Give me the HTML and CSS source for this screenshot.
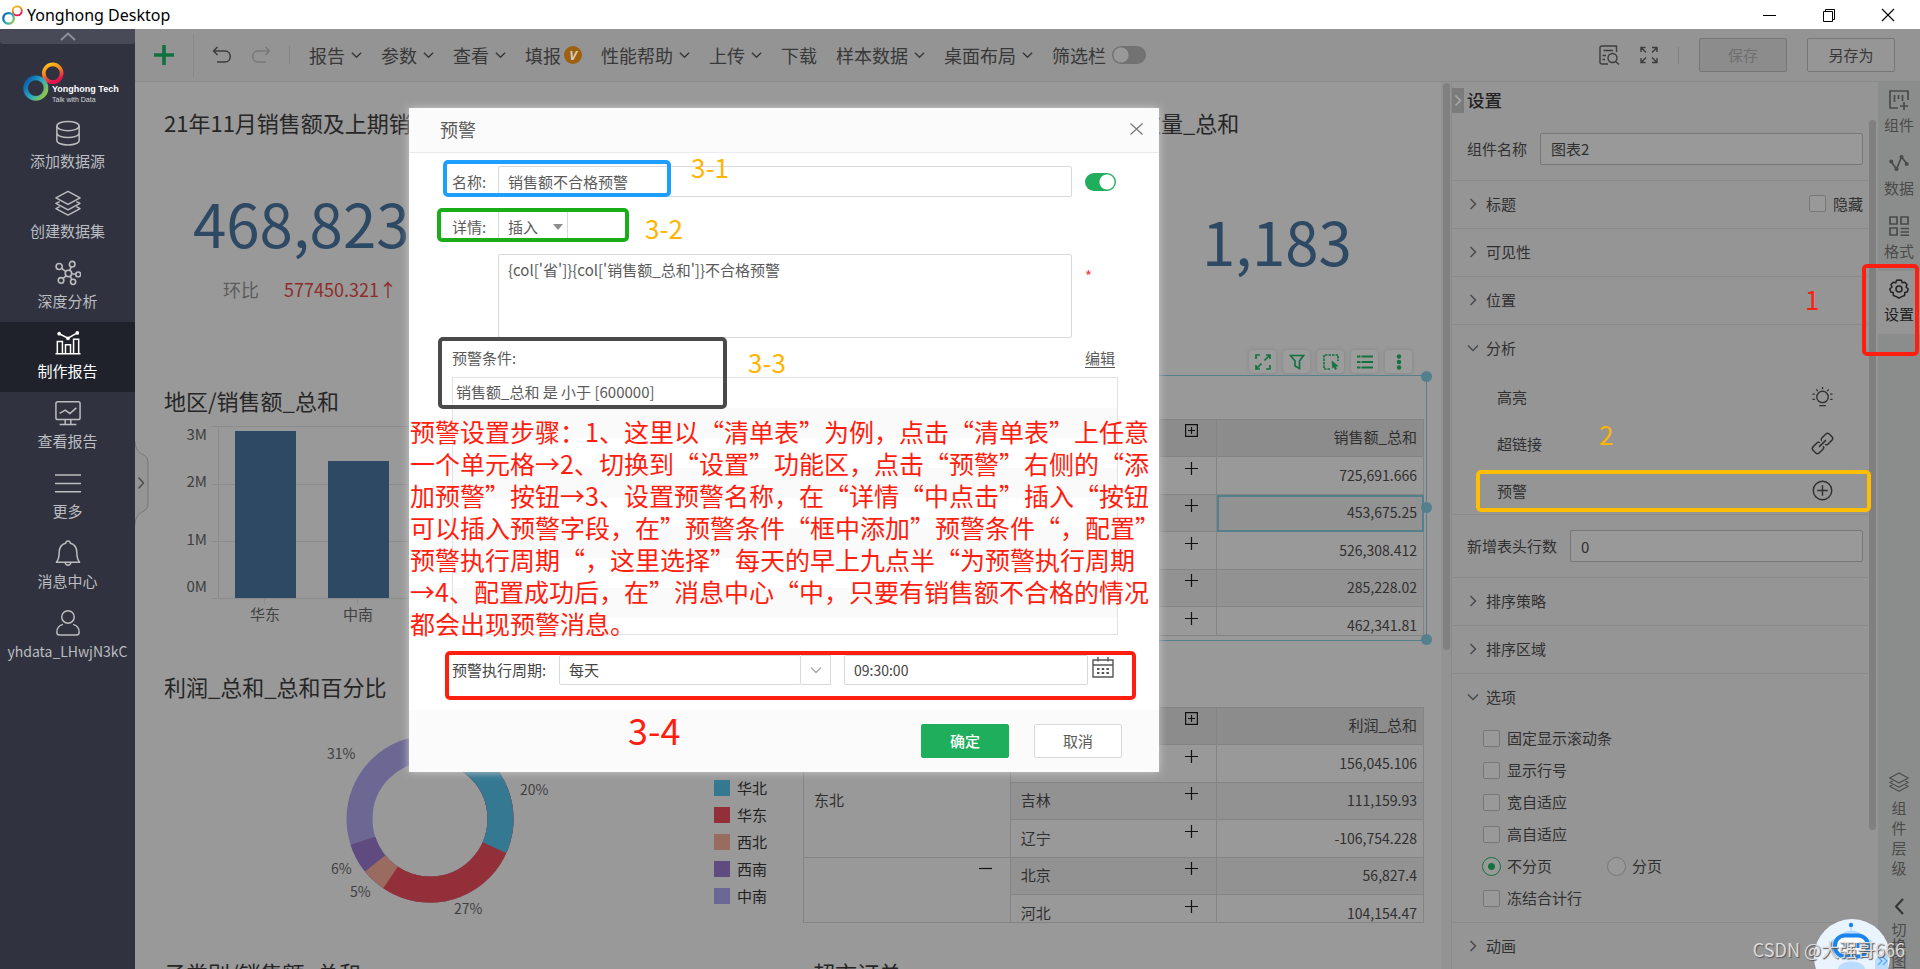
FILE: index.html
```html
<!DOCTYPE html>
<html lang="zh-CN">
<head>
<meta charset="utf-8">
<title>Yonghong Desktop</title>
<link rel="stylesheet" href="styles.css">
</head>
<body>
<svg class="defs" aria-hidden="true">
  <defs>
    <linearGradient id="warm" x1="0" y1="0" x2="0.4" y2="1"><stop offset="0" stop-color="#fbc91b"/><stop offset="0.5" stop-color="#f5861f"/><stop offset="1" stop-color="#e6124e"/></linearGradient>
    <linearGradient id="cool" x1="0" y1="0.2" x2="1" y2="0.9"><stop offset="0" stop-color="#0b62b0"/><stop offset="0.5" stop-color="#2aa9c4"/><stop offset="1" stop-color="#9ccb3b"/></linearGradient>
    <symbol id="down" viewBox="0 0 12 8"><path d="M1 1.5 6 6.5 11 1.5" fill="none" stroke="currentColor" stroke-width="1.5"/></symbol>
    <symbol id="right" viewBox="0 0 8 12"><path d="M1.5 1 6.5 6 1.5 11" fill="none" stroke="currentColor" stroke-width="1.5"/></symbol>
    <symbol id="plus" viewBox="0 0 13 13"><path d="M6.5 0V13M0 6.5H13" fill="none" stroke="currentColor" stroke-width="1.2"/></symbol>
    <symbol id="boxplus" viewBox="0 0 13 13"><path d="M.6.6H12.4V12.4H.6ZM6.5 3V10M3 6.5H10" fill="none" stroke="currentColor" stroke-width="1.2"/></symbol>
    <symbol id="layers" viewBox="0 0 28 28"><path d="M14 1.5 27 8.5 14 15.5 1 8.5ZM5 12.5 1 14.5 14 21.3 27 14.5 23 12.5M5 18 1 20 14 27 27 20 23 18" fill="none" stroke="currentColor" stroke-width="1.5" stroke-linejoin="round"/></symbol>
    <symbol id="rings" viewBox="0 0 40 38"><circle cx="29" cy="11" r="8.7" fill="none" stroke="url(#warm)" stroke-width="3.6"/><circle cx="12.500" cy="25.500" r="10" fill="none" stroke="url(#cool)" stroke-width="4.500"/></symbol>
  </defs>
</svg>

<header class="titlebar">
  <svg class="app-logo" viewBox="0 0 40 38"><use href="#rings"/></svg>
  <span class="app-name">Yonghong Desktop</span>
  <div class="window-buttons">
    <button aria-label="最小化"><svg width="14" height="14"><path d="M0 7.500H13" stroke="#000"/></svg></button>
    <button aria-label="还原"><svg width="14" height="14"><path d="M1.500 3.500H10.500V13.500H1.500ZM3.500 3.500V1.500H12.500V11.500H10.500" fill="none" stroke="#000"/></svg></button>
    <button aria-label="关闭"><svg width="14" height="14"><path d="M1 1 13 13M13 1 1 13" stroke="#000" stroke-width="1.1"/></svg></button>
  </div>
</header>

<div class="app">
  <nav class="sidebar">
    <button class="fold" aria-label="收起"><svg width="16" height="9"><path d="M1 8 8 1.500 15 8" fill="none" stroke="#8f929b" stroke-width="1.800"/></svg></button>
    <div class="brand">
      <svg class="brand-rings" viewBox="0 0 40 38"><use href="#rings"/></svg>
      <div class="brand-text"><b>Yonghong Tech</b><span>Talk with Data</span></div>
    </div>
    <a class="nav-item" href="#"><svg viewBox="0 0 28 28"><g fill="none" stroke="currentColor" stroke-width="1.6"><ellipse cx="14" cy="6.500" rx="12" ry="5"/><path d="M2 6.500V22C2 28.500 26 28.500 26 22V6.500M2 14C2 20.500 26 20.500 26 14"/></g></svg>添加数据源</a>
    <a class="nav-item" href="#"><svg><use href="#layers"/></svg>创建数据集</a>
    <a class="nav-item" href="#"><svg viewBox="0 0 28 28"><g fill="none" stroke="currentColor" stroke-width="1.700"><circle cx="14.500" cy="14.500" r="3.500"/><circle cx="4.500" cy="7" r="3.300"/><circle cx="18.500" cy="4.500" r="3"/><circle cx="25" cy="15.500" r="2.600"/><circle cx="6.500" cy="22" r="3"/><circle cx="19.500" cy="23.500" r="2.800"/><path d="M7.200 9 11.800 12.500M17.500 7.400 15.800 11.200M18 14.900 22.300 15.300M8.700 19.900 12 17M18.200 21 16.300 17.600"/></g></svg>深度分析</a>
    <a class="nav-item active" href="#"><svg viewBox="0 0 28 28"><g fill="none" stroke="currentColor" stroke-width="1.600"><path d="M.5 25.500H27.500M2.500 25V12.500H8V25M11.300 25V16H16.700V25M20 25V10H25.500V25M4.500 4 14 8.800 24 3.200"/></g><g fill="currentColor"><circle cx="4.500" cy="4" r="2"/><circle cx="14" cy="9" r="2"/><circle cx="24" cy="3.200" r="2"/></g></svg>制作报告</a>
    <a class="nav-item" href="#"><svg viewBox="0 0 28 28"><g fill="none" stroke="currentColor" stroke-width="1.600"><rect x="1" y="2" width="26" height="19" rx="2"/><path d="M5 14.500 11 11 16 14.500 23 8.500M11 21V26M17 21V26M5 26.500H23"/></g></svg>查看报告</a>
    <a class="nav-item" href="#"><svg viewBox="0 0 28 28"><path d="M0 5.500H28M0 14.500H28M0 23.500H28" stroke="currentColor" stroke-width="1.600"/></svg>更多</a>
    <a class="nav-item" href="#"><svg viewBox="0 0 28 28"><path d="M1.500 24C4 21 4.500 19 4.500 13.500 4.500 8 7.500 4.500 11.500 3.500 12 .3 16 .3 16.500 3.500 20.500 4.500 23.500 8 23.500 13.500 23.500 19 24 21 26.500 24ZM11 24.500C11.500 28 16.500 28 17 24.500" fill="none" stroke="currentColor" stroke-width="1.600" stroke-linejoin="round"/></svg>消息中心</a>
    <a class="nav-item user" href="#"><svg viewBox="0 0 28 28"><g fill="none" stroke="currentColor" stroke-width="1.600"><circle cx="14" cy="7.500" r="6.700"/><path d="M8.500 15.500C4.500 16.500 2 19.500 2 24 2 26 3 27 5 27H23C25 27 26 26 26 24 26 19.500 23.500 16.500 19.500 15.500"/></g></svg>yhdata_LHwjN3kC</a>
  </nav>

  <main class="main">
    <div class="toolbar">
      <button class="add" aria-label="新建"><svg width="20" height="20"><path d="M10 0V20M0 10H20" stroke="#10713f" stroke-width="3.600"/></svg></button>
      <div class="history">
        <button aria-label="撤销"><svg width="20" height="18"><path d="M5.500 1 1.500 5 5.500 9M1.500 5H13C20 5 20 16 13 16H5" fill="none" stroke="#3c3c3c" stroke-width="1.500"/></svg></button>
        <button aria-label="重做"><svg width="20" height="18"><path d="M14.500 1 18.500 5 14.500 9M18.500 5H7C0 5 0 16 7 16H15" fill="none" stroke="#787878" stroke-width="1.500"/></svg></button>
      </div>
      <div class="menus">
        <button>报告<svg><use href="#down"/></svg></button>
        <button>参数<svg><use href="#down"/></svg></button>
        <button>查看<svg><use href="#down"/></svg></button>
        <button class="tight">填报<span class="vip">V</span></button>
        <button>性能帮助<svg><use href="#down"/></svg></button>
        <button>上传<svg><use href="#down"/></svg></button>
        <button>下载</button>
        <button>样本数据<svg><use href="#down"/></svg></button>
        <button>桌面布局<svg><use href="#down"/></svg></button>
        <label class="filter">筛选栏<input type="checkbox" class="switch"></label>
      </div>
      <div class="actions">
        <button aria-label="预览"><svg width="21" height="20"><g fill="none" stroke="#3c3c3c" stroke-width="1.400"><path d="M9 19H3C2 19 1 18.500 1 17.500V2.500C1 1.500 2 1 3 1H17.500V7M4.500 5.500H14M3.500 10.500H7M3.500 14.500H6"/><circle cx="13.500" cy="13" r="4.500"/><path d="M16.500 16.500 20 19.500"/></g></svg></button>
        <button aria-label="全屏"><svg width="18" height="18"><path d="M1 6V1.500H5.500M1 1.500 6 6.500M12 1.500H17V6M17 1.500 12 6.500M1 12V16.500H5.500M1 16.500 6 11.500M12 16.500H17V12M17 16.500 12 11.500" fill="none" stroke="#3c3c3c" stroke-width="1.400"/></svg></button>
        <span class="sep"></span>
        <button class="btn disabled">保存</button>
        <button class="btn">另存为</button>
      </div>
    </div>

    <div class="workspace">
      <section class="canvas">
        <div class="board">
          <div class="kpis">
            <article class="kpi">
              <h2>21年11月销售额及上期销售额</h2>
              <p class="figure">468,823</p>
              <p class="compare">环比<span>577450.321↑</span></p>
            </article>
            <article class="kpi quantity">
              <h2>数量_总和</h2>
              <p class="figure">1,183</p>
            </article>
          </div>

          <article class="widget">
            <h2>地区/销售额_总和</h2>
            <svg class="bars" viewBox="0 0 600 206">
              <path d="M48 6.500H600M48 64.500H600M48 121.500H600M48 178.500H600M54.500 6V179M100.500 179V184M193.500 179V184" stroke="#8b8b8b" fill="none"/>
              <rect x="71" y="11" width="61" height="167" fill="#2e4963"/>
              <rect x="164" y="41" width="61" height="137" fill="#2e4963"/>
              <g text-anchor="end"><text x="43" y="20">3M</text><text x="43" y="67">2M</text><text x="43" y="125">1M</text><text x="43" y="172">0M</text></g>
              <g text-anchor="middle" class="cat"><text x="101" y="200">华东</text><text x="194" y="200">中南</text></g>
            </svg>
          </article>

          <article class="widget">
            <div class="pivot sales">
              <table>
                <tr><th></th><th><div><span></span><button aria-label="展开全部"><svg><use href="#boxplus"/></svg></button></div></th><th class="num">销售额_总和</th></tr>
                <tr><td></td><td><div><span></span><button aria-label="展开"><svg><use href="#plus"/></svg></button></div></td><td class="num">725,691.666</td></tr>
                <tr><td></td><td><div><span></span><button aria-label="展开"><svg><use href="#plus"/></svg></button></div></td><td class="num picked">453,675.25</td></tr>
                <tr><td></td><td><div><span></span><button aria-label="展开"><svg><use href="#plus"/></svg></button></div></td><td class="num">526,308.412</td></tr>
                <tr><td></td><td><div><span></span><button aria-label="展开"><svg><use href="#plus"/></svg></button></div></td><td class="num">285,228.02</td></tr>
                <tr><td></td><td><div><span></span><button aria-label="展开"><svg><use href="#plus"/></svg></button></div></td><td class="num">462,341.81</td></tr>
              </table>
            </div>
            <div class="selection"><i></i><i></i><i></i></div>
            <div class="widget-tools">
              <button aria-label="放大"><svg viewBox="0 0 16 16"><path d="M1 5V1H5M11 1H15V5M15 11V15H11M5 15H1V11M9.500 6.500 15 1M6.500 9.500 1 15"/></svg></button>
              <button aria-label="筛选"><svg viewBox="0 0 16 16"><path d="M1.500 1.500H14.500L10.500 7V14.500L6 12V7Z"/></svg></button>
              <button aria-label="框选"><svg viewBox="0 0 16 16"><path d="M7 15H1V1H15V7" stroke-dasharray="2.500 1"/><path d="M9 7 15 12 12.500 12.500 13.500 15 12 15.500 11 13 9.500 14Z" fill="currentColor" stroke-width=".6"/></svg></button>
              <button aria-label="明细"><svg viewBox="0 0 16 16"><path d="M0 2.500H3.500M4.500 2.500H16M0 8H3.500M4.500 8H16M0 13.500H3.500M4.500 13.500H16" stroke-width="2.200"/></svg></button>
              <button aria-label="更多"><svg viewBox="0 0 16 16"><g fill="currentColor" stroke="none"><circle cx="8" cy="2.500" r="2.200"/><circle cx="8" cy="8" r="2.200"/><circle cx="8" cy="13.500" r="2.200"/></g></svg></button>
            </div>
          </article>

          <article class="widget">
            <h2>利润_总和_总和百分比</h2>
            <div class="donut-row">
              <svg class="donut" viewBox="0 0 400 220">
                <g fill="none" stroke-width="26" transform="rotate(-90 266 121)">
                  <circle cx="266" cy="121" r="70.500" pathLength="360" stroke="#6c6893"/>
                  <circle cx="266" cy="121" r="70.500" pathLength="360" stroke="#5f4b80" stroke-dasharray="252 360"/>
                  <circle cx="266" cy="121" r="70.500" pathLength="360" stroke="#9a6b5f" stroke-dasharray="231 360"/>
                  <circle cx="266" cy="121" r="70.500" pathLength="360" stroke="#932f39" stroke-dasharray="214 360"/>
                  <circle cx="266" cy="121" r="70.500" pathLength="360" stroke="#357892" stroke-dasharray="114 360"/>
                </g>
                <text x="163" y="61">31%</text><text x="356" y="97">20%</text><text x="167" y="176">6%</text><text x="186" y="199">5%</text><text x="290" y="216">27%</text>
              </svg>
              <ul class="legend">
                <li class="nb">华北</li><li class="hd">华东</li><li class="xb">西北</li><li class="xn">西南</li><li class="zn">中南</li>
              </ul>
            </div>
          </article>

          <article class="widget">
            <div class="pivot profit">
              <table>
                <tr><th></th><th><div><span></span><button aria-label="展开全部"><svg><use href="#boxplus"/></svg></button></div></th><th class="num">利润_总和</th></tr>
                <tr><td rowspan="3">东北</td><td><div><span></span><button aria-label="展开"><svg><use href="#plus"/></svg></button></div></td><td class="num">156,045.106</td></tr>
                <tr><td><div><span>吉林</span><button aria-label="展开"><svg><use href="#plus"/></svg></button></div></td><td class="num">111,159.93</td></tr>
                <tr><td><div><span>辽宁</span><button aria-label="展开"><svg><use href="#plus"/></svg></button></div></td><td class="num">-106,754.228</td></tr>
                <tr><td rowspan="2" class="top"><div><span></span><button aria-label="收起"><svg viewBox="0 0 13 13"><path d="M0 6.500H13" stroke="currentColor" stroke-width="1.200"/></svg></button></div></td><td><div><span>北京</span><button aria-label="展开"><svg><use href="#plus"/></svg></button></div></td><td class="num">56,827.4</td></tr>
                <tr><td><div><span>河北</span><button aria-label="展开"><svg><use href="#plus"/></svg></button></div></td><td class="num">104,154.47</td></tr>
              </table>
            </div>
          </article>

          <article class="widget"><h2>子类别/销售额_总和</h2></article>
          <article class="widget"><h2 class="inset">超市订单</h2></article>
        </div>
        <div class="scroll"><span></span></div>
        <button class="flap" aria-label="展开左侧栏"><svg width="14" height="84"><path d="M0 .500C1 17 13 10 13 22V62C13 74 1 67 0 83.500" fill="#959595" stroke="#74767c"/><path d="M3.500 36.500 8.500 42 3.500 47.500" fill="none" stroke="#4c4c4c" stroke-width="1.400"/></svg></button>
      </section>

      <aside class="settings">
        <button class="tab-fold" aria-label="收起设置"><svg><use href="#right"/></svg></button>
        <h3>设置</h3>
        <div class="panel-row name-row"><label for="cname">组件名称</label><input id="cname" type="text" value="图表2"></div>
        <div class="section"><button class="head"><svg class="r"><use href="#right"/></svg>标题</button><label class="check"><input type="checkbox">隐藏</label></div>
        <div class="section"><button class="head"><svg class="r"><use href="#right"/></svg>可见性</button></div>
        <div class="section"><button class="head"><svg class="r"><use href="#right"/></svg>位置</button></div>
        <div class="group">
          <button class="head"><svg class="d"><use href="#down"/></svg>分析</button>
          <div class="feature">高亮<button aria-label="高亮"><svg viewBox="0 0 22 22"><g fill="none" stroke="currentColor" stroke-width="1.400"><circle cx="11" cy="11.500" r="6"/><path d="M7.500 20.500H14.500M11 1V3.500M4.500 3.500 6 5.300M17.500 3.500 16 5.300M.5 8.500H3M.5 14H3M21.500 8.500H19M21.500 14H19"/></g></svg></button></div>
          <div class="feature">超链接<button aria-label="超链接"><svg viewBox="0 0 22 22"><g fill="none" stroke="currentColor" stroke-width="1.500" transform="rotate(-45 11 11)"><path d="M9.500 8.500V8A2 2 0 0 0 7.500 6.500H1.500A2.500 2.500 0 0 0-1 9V13A2.500 2.500 0 0 0 1.500 15.500H7.500A2 2 0 0 0 9.500 13.500M12.500 8.500V8A2 2 0 0 1 14.500 6.500H20.500A2.500 2.500 0 0 1 23 9V13A2.500 2.500 0 0 1 20.500 15.500H14.500A2 2 0 0 1 12.500 13.500M6 11H16"/></g></svg></button></div>
          <div class="feature">预警<button aria-label="添加预警"><svg viewBox="0 0 22 22"><g fill="none" stroke="currentColor" stroke-width="1.500"><circle cx="11" cy="11" r="9.700"/><path d="M11 5.500V16.500M5.500 11H16.500"/></g></svg></button></div>
        </div>
        <div class="panel-row"><label for="hrows">新增表头行数</label><input id="hrows" type="text" value="0"></div>
        <div class="section"><button class="head"><svg class="r"><use href="#right"/></svg>排序策略</button></div>
        <div class="section"><button class="head"><svg class="r"><use href="#right"/></svg>排序区域</button></div>
        <div class="group options">
          <button class="head"><svg class="d"><use href="#down"/></svg>选项</button>
          <label class="check"><input type="checkbox">固定显示滚动条</label>
          <label class="check"><input type="checkbox">显示行号</label>
          <label class="check"><input type="checkbox">宽自适应</label>
          <label class="check"><input type="checkbox">高自适应</label>
          <div class="radios"><label class="check"><input type="radio" name="page" checked>不分页</label><label class="check"><input type="radio" name="page">分页</label></div>
          <label class="check"><input type="checkbox">冻结合计行</label>
        </div>
        <div class="section last"><button class="head"><svg class="r"><use href="#right"/></svg>动画</button></div>
        <div class="panel-scroll"></div>
      </aside>

      <div class="rail">
        <button><svg viewBox="0 0 20 20"><path d="M19 10V1H1V18H9M5.500 5V12M9.500 5V9M13.500 5V11M15 12V20M11 16H19" fill="none" stroke="currentColor" stroke-width="1.700"/></svg>组件</button>
        <button><svg viewBox="0 0 20 20"><path d="M2 8.500 7.500 16 12.500 4 18 11" fill="none" stroke="currentColor" stroke-width="1.700"/><g fill="currentColor"><circle cx="2.300" cy="8.500" r="2"/><circle cx="7.500" cy="16" r="2"/><circle cx="12.500" cy="4" r="2"/><circle cx="17.700" cy="11" r="2"/></g></svg>数据</button>
        <button><svg viewBox="0 0 20 20"><path d="M1 1H8V8H1ZM12 1H19V8H12ZM1 12H8V19H1ZM11.500 12.500H20M11.500 16H20M11.500 19.300H20" fill="none" stroke="currentColor" stroke-width="1.700"/></svg>格式</button>
        <button class="on"><svg viewBox="0 0 20 20"><path d="M10 .900 12.400 1.300 13.200 3.700 15.800 3.200 18 5.600 17 8 19.200 10 18.200 13 15.800 13.600 15.600 16.500 12.700 17.600 10 19.200 7.300 17.600 4.400 16.500 4.200 13.600 1.800 13 .8 10 3 8 2 5.600 4.200 3.200 6.800 3.700 7.600 1.300Z" fill="none" stroke="currentColor" stroke-width="1.500" stroke-linejoin="round"/><circle cx="10" cy="10" r="3" fill="none" stroke="currentColor" stroke-width="1.500"/></svg>设置</button>
        <div class="rail-bottom">
          <button class="stack"><svg><use href="#layers"/></svg><span>组件层级</span></button>
          <button class="flip"><svg width="10" height="17"><path d="M9 1 2 8.500 9 16" fill="none" stroke="#333" stroke-width="2"/></svg><span>切换图</span></button>
        </div>
      </div>
    </div>
  </main>
</div>

<form class="dialog" role="dialog" aria-label="预警">
  <header><h1>预警</h1><button type="button" aria-label="关闭"><svg width="13" height="12"><path d="M.5.5 12.500 11.500M12.500.5.5 11.500" stroke="#777" stroke-width="1.200"/></svg></button></header>
  <div class="dialog-body">
    <div class="field"><label for="wname">名称:</label><input id="wname" type="text" value="销售额不合格预警"><input type="checkbox" class="switch green" aria-label="启用" checked></div>
    <div class="field"><label for="insert">详情:</label><div class="insert"><select id="insert"><option>插入</option></select><svg width="10" height="6"><path d="M0 0H10L5 6Z" fill="#8d8d8d"/></svg></div></div>
    <div class="field detail"><span></span><textarea aria-label="详情">{col['省']}{col['销售额_总和']}不合格预警</textarea><span class="must">*</span></div>
    <div class="cond-head"><span>预警条件:</span><a href="#">编辑</a></div>
    <ul class="conds"><li>销售额_总和 是 小于 [600000]</li></ul>
    <div class="period">
      <label for="cycle">预警执行周期:</label>
      <div class="cycle"><select id="cycle"><option>每天</option></select><span><svg><use href="#down"/></svg></span></div>
      <input type="text" aria-label="时间" value="09:30:00">
      <button type="button" aria-label="选择时间"><svg width="22" height="21"><path d="M1 3H21V20H1ZM1 8H21M6 0V4.500M16 0V4.500" fill="none" stroke="#555" stroke-width="1.400"/><path d="M5 12H17M5 16H17" stroke="#555" stroke-width="2.200" stroke-dasharray="2.500 2.200"/></svg></button>
    </div>
  </div>
  <footer><button type="button" class="ok">确定</button><button type="button" class="cancel">取消</button></footer>
</form>

<div class="mark box blue"></div>
<div class="mark box leaf"></div>
<div class="mark box slate"></div>
<div class="mark box cycle-box"></div>
<div class="mark box amber"></div>
<div class="mark box rail-box"></div>
<span class="mark tag t31">3-1</span>
<span class="mark tag t32">3-2</span>
<span class="mark tag t33">3-3</span>
<span class="mark tag t34">3-4</span>
<span class="mark tag t1">1</span>
<span class="mark tag t2">2</span>
<p class="mark steps">预警设置步骤：1、这里以“清单表”为例，点击“清单表”上任意<br>一个单元格→2、切换到“设置”功能区，点击“预警”右侧的“添<br>加预警”按钮→3、设置预警名称，在“详情“中点击”插入“按钮<br>可以插入预警字段，在”预警条件“框中添加”预警条件“，配置”<br>预警执行周期“，这里选择”每天的早上九点半“为预警执行周期<br>→4、配置成功后，在”消息中心“中，只要有销售额不合格的情况<br>都会出现预警消息。</p>

<svg class="robot" viewBox="0 0 76 50" aria-hidden="true">
  <circle cx="38" cy="38" r="38" fill="#eaf4ff"/>
  <circle cx="37" cy="6" r="2.200" fill="#1c84f0"/><path d="M37 8V12" stroke="#b9dcff" stroke-width="1.500"/>
  <path d="M27 17C29 10 46 10 48 17Z" fill="#b9dcff"/>
  <rect x="16" y="20" width="43" height="14" rx="5" fill="#b9dcff"/>
  <rect x="21" y="16.500" width="33" height="21" rx="10" fill="#fff" stroke="#1c84f0" stroke-width="4"/>
  <path d="M31 24V29M44 24V29" stroke="#1c84f0" stroke-width="3"/>
  <path d="M24 50C25 40 50 40 51 50Z" fill="#b9dcff"/>
  <path d="M61 50V42C62 37 68 34 74 34V50Z" fill="#b9dcff"/><path d="M64 38 68 42 64 46M69 38 73 42 69 46" fill="none" stroke="#5aa8f8" stroke-width="1.200"/>
</svg>
<span class="watermark">CSDN @大强哥666</span>
</body>
</html>
```

FILE: styles.css
```css
* { box-sizing: border-box; }

body {
  margin: 0;
  height: 100vh;
  overflow: hidden;
  display: flex;
  flex-direction: column;
  position: relative;
  background: #fff;
  color: #303030;
  font: 15px/20px "Noto Sans CJK SC", "Noto Sans", sans-serif;
}

h1, h2, h3, p, ul { margin: 0; padding: 0; font-weight: 400; list-style: none; }
button, input, select, textarea { font: inherit; color: inherit; margin: 0; }
button { padding: 0; border: 0; background: none; }
a { color: inherit; text-decoration: none; }
.defs { position: absolute; width: 0; height: 0; }

/* Title bar */
.titlebar { flex: none; height: 29px; display: flex; align-items: center; background: #fff; color: #000; }
.app-logo { width: 21px; height: 20px; margin: 0 4px 0 2px; }
.app-name { font-family: "Noto Sans", sans-serif; font-size: 16px; }
.window-buttons { margin-left: auto; display: flex; padding-right: 3px; }
.window-buttons button { width: 59px; height: 28px; display: grid; place-items: center; }

.app { flex: 1; min-height: 0; display: flex; }

/* Sidebar */
.sidebar { flex: none; width: 135px; background: #30333f; color: #bcbdc1; overflow: hidden; }
.fold { display: grid; place-items: center; width: 100%; height: 15px; background: #484b57; border-radius: 0 0 3px 3px; }
.brand { height: 68px; padding: 18px 0 0 23px; display: flex; }
.brand-rings { flex: none; width: 41px; height: 39px; }
.brand-text { margin: 22px 0 0 -12px; color: #fff; display: flex; flex-direction: column; white-space: nowrap; }
.brand-text b { font: 700 9px/11px "Liberation Sans", sans-serif; }
.brand-text span { color: #d4d5d8; font: 7px/9px "Liberation Sans", sans-serif; }
.nav-item { height: 70px; padding-top: 8px; display: flex; flex-direction: column; align-items: center; gap: 5px; }
.nav-item svg { width: 26px; height: 26px; }
.nav-item.active { background: #20222b; color: #fff; }
.nav-item.user { font-size: 14px; }

.main { flex: 1; min-width: 0; display: flex; flex-direction: column; background: #999; }

/* Toolbar */
.toolbar { flex: none; height: 53px; display: flex; align-items: center; background: #949494; border-bottom: 1px solid #898989; color: #383838; font-size: 18px; }
.toolbar button { display: flex; align-items: center; }
.toolbar .add { width: 59px; height: 43px; justify-content: center; border-right: 1px solid #898989; }
.history { display: flex; gap: 19px; padding: 0 18px; height: 18px; border-right: 1px solid #828282; }
.menus { display: flex; gap: 19px; padding: 0 0 1px 19px; white-space: nowrap; }
.menus button, .filter { display: flex; align-items: center; gap: 6px; }
.menus .tight { gap: 3px; }
.menus svg { width: 11px; height: 8px; }
.vip { width: 18px; height: 18px; border-radius: 50%; background: #9c6010; color: #d8cdbb; font: italic 700 13px/18px "Noto Sans", sans-serif; text-align: center; }
.switch { appearance: none; width: 34px; height: 18px; border-radius: 9px; background: radial-gradient(circle at 9px 9px, #999 7px, transparent 8px) #727272; }
.actions { margin-left: auto; padding-right: 25px; display: flex; align-items: center; gap: 20px; }
.actions .sep { width: 1px; height: 17px; background: #808080; }
.actions .btn { width: 88px; height: 34px; justify-content: center; border: 1px solid #777; border-radius: 2px; font-size: 15px; background: #969696; }
.actions .disabled { background: #8c8c8c; color: #6f6f6f; }

.workspace { flex: 1; min-height: 0; display: flex; }

/* Dashboard canvas */
.canvas { flex: 1; min-width: 0; display: flex; position: relative; overflow: hidden; }
.board {
  flex: 1; min-width: 0; padding: 20px 17px 0 29px;
  display: grid; grid-template: 278px 286px 286px 60px / minmax(0, 639fr) minmax(0, 621fr);
}
.board h2 { font-size: 22px; line-height: 40px; color: #262626; white-space: nowrap; }
.board h2.inset { padding-left: 10px; }
.kpis { grid-column: 1 / 3; display: grid; grid-template-columns: minmax(0, 975fr) minmax(0, 285fr); }
.figure { font-size: 60px; line-height: 80px; color: #2e4963; padding: 40px 0 0 29px; }
.compare { padding: 12px 0 0 59px; font-size: 18px; line-height: 30px; color: #5c5c5c; }
.compare span { color: #8f2c2a; padding-left: 25px; }
.quantity .figure { padding: 58px 0 0 63px; }
.widget { position: relative; min-width: 0; }
.bars { display: block; width: 600px; height: 206px; }
.bars text, .donut text { font-size: 15px; fill: #404040; }
.donut-row { display: flex; justify-content: space-between; padding-right: 36px; }
.donut { width: 400px; height: 220px; margin-top: -8px; }
.donut text { font-size: 14px; }
.legend { padding-top: 68px; display: grid; grid-auto-rows: 27px; color: #222; }
.legend li { display: flex; align-items: center; gap: 7px; }
.legend li::before { content: ""; width: 16px; height: 16px; background: #6c6893; }
.legend .nb::before { background: #357892; }
.legend .hd::before { background: #932f39; }
.legend .xb::before { background: #9a6b5f; }
.legend .xn::before { background: #5f4b80; }

.pivot { overflow: hidden; border: solid #848484; border-width: 0 0 1px; }
.sales { margin-top: 39px; height: 217px; }
.profit { margin-top: 41px; height: 216px; }
.pivot table { width: 100%; table-layout: fixed; border-collapse: collapse; }
.pivot tr { height: 38px; }
.pivot tr:nth-child(odd) { height: 37px; }
.pivot th, .pivot td { padding: 0 6px 2px 10px; border: 1px solid #848484; font-weight: 400; text-align: left; }
.pivot th { background: #8c8c8c; }
.pivot tr:nth-child(odd) td:not([rowspan]) { background: #929292; }
.pivot .num { text-align: right; font-size: 14px; }
.pivot th.num { font-size: 15px; }
.pivot div { display: flex; justify-content: space-between; align-items: center; height: 34px; padding-right: 12px; }
.pivot div button { align-self: flex-start; padding-top: 4px; color: #111; }
.pivot svg { display: block; width: 13px; height: 13px; }
.pivot .top { vertical-align: top; }
.pivot .picked { outline: 2px solid #54808e; outline-offset: -2px; }

.selection { position: absolute; inset: -5px -3px 25px 0; border: 1px solid #54808e; }
.selection i { position: absolute; right: -6px; top: -5px; width: 11px; height: 11px; border-radius: 50%; background: #54808e; }
.selection i:nth-child(2) { top: 126px; }
.selection i:nth-child(3) { top: auto; bottom: -5px; }
.widget-tools { position: absolute; right: 12px; top: -30px; display: flex; gap: 7px; color: #13733f; }
.widget-tools button { width: 27px; height: 23px; display: grid; place-items: center; background: #9c9c9c; border-radius: 4px; box-shadow: 0 0 4px #858585; }
.widget-tools svg { width: 16px; height: 16px; fill: none; stroke: currentColor; stroke-width: 1.7; }

.scroll { flex: none; width: 10px; background: #939393; padding: 1px 1px 0 2px; }
.scroll span { display: block; height: 64%; background: #808080; border-radius: 4px; }
.flap { position: absolute; left: 0; top: 359px; }

/* Settings panel */
.settings { flex: none; width: 427px; position: relative; background: #959595; border-left: 1px solid #8a8a8a; overflow: hidden; padding-left: 1px; }
.settings h3 { padding-left: 14px; line-height: 36px; height: 39px; color: #222; font-weight: 500; }
.tab-fold { position: absolute; left: 0; top: 6px; width: 12px; height: 25px; background: #7c7c7c; color: #aaa; display: grid; place-items: center; }
.tab-fold svg { width: 8px; height: 13px; }
.panel-row { height: 63px; display: flex; align-items: center; gap: 13px; padding: 0 5px 0 14px; border-bottom: 1px solid #8a8a8a; margin-right: 10px; }
.name-row { height: 60px; padding-bottom: 4px; }
.panel-row input { flex: 1; min-width: 0; height: 32px; padding: 0 10px; border: 1px solid #777; border-radius: 2px; background: #999; }
.section { height: 48px; display: flex; align-items: center; justify-content: space-between; padding-right: 5px; margin-right: 10px; border-bottom: 1px solid #8a8a8a; }
.section.last { border: 0; }
.group { border-bottom: 1px solid #8a8a8a; margin-right: 10px; }
.head { height: 48px; padding: 0 0 2px 14px; display: flex; align-items: center; gap: 7px; }
.head svg { width: 12px; height: 12px; color: #4a4a4a; }
.head .d { height: 8px; }
.feature { height: 47px; padding: 0 35px 0 44px; display: flex; align-items: center; justify-content: space-between; }
.feature svg { display: block; width: 21px; height: 21px; overflow: visible; }
.check { height: 32px; display: flex; align-items: center; gap: 7px; }
.section .check { padding-bottom: 2px; }
.check input { appearance: none; width: 17px; height: 17px; border: 1px solid #777; border-radius: 2px; background: #999; }
.check input[type="radio"] { width: 19px; height: 19px; border-radius: 50%; margin-left: -1px; margin-right: -1px; }
.check input[type="radio"]:checked { border: 1px solid #13733f; background: radial-gradient(circle, #13733f 3px, #999 4px); }
.options { padding-bottom: 8px; }
.options .check { padding-left: 30px; }
.radios { display: flex; gap: 26px; }
.panel-scroll { position: absolute; right: 2px; top: 38px; width: 7px; height: 80%; border-radius: 4px; background: #808080; }

/* Right rail */
.rail { flex: none; width: 42px; background: #8a8d8b; color: #4a4a4a; display: flex; flex-direction: column; overflow: hidden; }
.rail > button { flex: none; height: 63px; padding-bottom: 2px; display: flex; flex-direction: column; align-items: center; justify-content: center; gap: 5px; }
.rail svg { width: 20px; height: 20px; }
.rail .on { background: #959595; color: #222; }
.rail-bottom { margin-top: auto; display: flex; flex-direction: column; align-items: center; }
.rail-bottom button { display: flex; flex-direction: column; align-items: center; gap: 6px; }
.rail-bottom span { width: 15px; line-height: 20px; }
.rail-bottom .flip { padding-top: 20px; }
.rail-bottom .flip svg { width: 10px; height: 17px; }
.rail-bottom .flip span { line-height: 16px; }

/* Alert dialog */
.dialog { position: absolute; left: 409px; top: 108px; width: 750px; background: #fff; color: #5a5a5a; border-radius: 2px; box-shadow: 0 0 8px #ccc; }
.dialog header { height: 45px; padding: 0 16px 2px 31px; display: flex; align-items: center; justify-content: space-between; background: #fbfbfb; border-bottom: 1px solid #eaeaf0; }
.dialog h1 { font-size: 18px; }
.dialog-body { padding: 13px 41px 26px 43px; }
.dialog input[type="text"], .dialog textarea, .dialog select { border: 1px solid #d9d9d9; border-radius: 2px; background: #fff; padding: 0 9px; }
.dialog select { appearance: none; width: 100%; height: 100%; }
.field { display: grid; grid-template-columns: 46px minmax(0, 1fr) 33px; align-items: center; height: 31px; margin-bottom: 14px; }
.field input[type="text"] { height: 31px; margin-right: 13px; }
.dialog .switch { justify-self: start; width: 31px; background: radial-gradient(circle at 22px 9px, #fff 7px, transparent 8px) #1fae5c; }
.insert { position: relative; width: 70px; height: 31px; }
.insert svg { position: absolute; right: 5px; top: 13px; }
.detail { height: 84px; margin: -2px 0 6px; }
.detail textarea { height: 84px; margin-right: 13px; padding-top: 5px; resize: none; }
.must { color: #f33; align-self: start; padding-top: 12px; }
.cond-head { display: flex; justify-content: space-between; align-items: center; height: 28px; padding-right: 3px; }
.cond-head a { border-bottom: 1px solid #555; line-height: 18px; }
.conds { height: 258px; margin-top: 5px; border: 1px solid #e2e2e2; padding-left: 3px; line-height: 27px; background: repeating-linear-gradient(#fff 0 30px, #fafafa 30px 60px); }
.period { margin-top: 20px; height: 29px; display: flex; align-items: center; color: #444; }
.cycle { display: flex; width: 272px; height: 30px; margin-left: auto; }
.cycle span { flex: none; width: 30px; display: grid; place-items: center; border: 1px solid #d9d9d9; border-left: 0; color: #aaa; }
.cycle svg { width: 12px; height: 8px; }
.period input[type="text"] { width: 244px; height: 30px; margin: 0 2px 0 13px; font-size: 14px; }
.period button { width: 28px; text-align: left; padding-left: 2px; }
.dialog footer { height: 62px; padding: 0 37px 1px 0; display: flex; align-items: center; justify-content: flex-end; gap: 25px; background: #fbfbfb; }
.dialog footer button { width: 88px; height: 34px; border: 1px solid #d9d9d9; border-radius: 2px; background: #fff; }
.dialog footer .ok { background: #1fae5c; border-color: #1fae5c; color: #fff; font-weight: 500; }

/* Annotation marks laid over the window */
.mark { position: absolute; }
.box { border: 4px solid #ff1e10; border-radius: 5px; pointer-events: none; }
.blue { left: 443px; top: 160px; width: 228px; height: 37px; border-color: #1e9fff; }
.leaf { left: 437px; top: 208px; width: 192px; height: 34px; border-color: #1aad19; }
.slate { left: 438px; top: 337px; width: 289px; height: 72px; border-color: #4a4a4a; }
.cycle-box { left: 445px; top: 651px; width: 691px; height: 49px; }
.amber { left: 1476px; top: 470px; width: 395px; height: 42px; border-color: #ffbf00; }
.rail-box { left: 1862px; top: 264px; width: 57px; height: 92px; }
.tag { font-size: 26px; line-height: 30px; color: #ffb400; }
.t31 { left: 691px; top: 152px; }
.t32 { left: 645px; top: 213px; }
.t33 { left: 748px; top: 347px; }
.t34 { left: 628px; top: 714px; font-size: 36px; color: #ff1e10; }
.t1 { left: 1805px; top: 284px; color: #ff1e10; }
.t2 { left: 1599px; top: 419px; }
.steps { left: 410px; top: 415px; font-size: 25px; line-height: 32px; color: #ff1e10; white-space: nowrap; }

.robot { position: absolute; left: 1814px; bottom: 0; width: 76px; height: 50px; }
.watermark { position: absolute; right: 15px; bottom: 9px; font-size: 18px; line-height: 22px; color: #dcdcdc; text-shadow: 1px 1px 1px #555; white-space: nowrap; }
```
